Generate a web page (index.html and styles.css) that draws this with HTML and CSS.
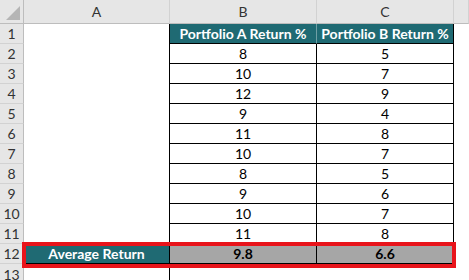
FILE: index.html
```html
<!DOCTYPE html>
<html>
<head>
<meta charset="utf-8">
<link rel="stylesheet" href="styles.css">
</head>
<body>
<div class="sheet">
  <div class="row head">
    <div class="rh corner"><span class="tri"></span></div>
    <div class="ch a">A</div>
    <div class="ch b">B</div>
    <div class="ch c">C</div>
    <div class="ch rest"></div>
  </div>
  <div class="row">
    <div class="rh">1</div>
    <div class="cell a blank"></div>
    <div class="cell b title">Portfolio A Return %</div>
    <div class="cell c title">Portfolio B Return %</div>
    <div class="cell rest"></div>
  </div>
  <div class="row"><div class="rh">2</div><div class="cell a blank"></div><div class="cell b">8</div><div class="cell c">5</div><div class="cell rest"></div></div>
  <div class="row"><div class="rh">3</div><div class="cell a blank"></div><div class="cell b">10</div><div class="cell c">7</div><div class="cell rest"></div></div>
  <div class="row"><div class="rh">4</div><div class="cell a blank"></div><div class="cell b">12</div><div class="cell c">9</div><div class="cell rest"></div></div>
  <div class="row"><div class="rh">5</div><div class="cell a blank"></div><div class="cell b">9</div><div class="cell c">4</div><div class="cell rest"></div></div>
  <div class="row"><div class="rh">6</div><div class="cell a blank"></div><div class="cell b">11</div><div class="cell c">8</div><div class="cell rest"></div></div>
  <div class="row"><div class="rh">7</div><div class="cell a blank"></div><div class="cell b">10</div><div class="cell c">7</div><div class="cell rest"></div></div>
  <div class="row"><div class="rh">8</div><div class="cell a blank"></div><div class="cell b">8</div><div class="cell c">5</div><div class="cell rest"></div></div>
  <div class="row"><div class="rh">9</div><div class="cell a blank"></div><div class="cell b">9</div><div class="cell c">6</div><div class="cell rest"></div></div>
  <div class="row"><div class="rh">10</div><div class="cell a blank"></div><div class="cell b">10</div><div class="cell c">7</div><div class="cell rest"></div></div>
  <div class="row"><div class="rh">11</div><div class="cell a blank"></div><div class="cell b">11</div><div class="cell c">8</div><div class="cell rest"></div></div>
  <div class="row">
    <div class="rh">12</div>
    <div class="hl">
      <div class="cell a label">Average Return</div>
      <div class="cell b avg">9.8</div>
      <div class="cell c avg">6.6</div>
    </div>
    <div class="cell rest"></div>
  </div>
  <div class="row"><div class="rh">13</div><div class="cell a blank"></div><div class="cell b plain"></div><div class="cell c plain"></div><div class="cell rest"></div></div>
</div>
</body>
</html>
```

FILE: styles.css
```css
* { box-sizing: border-box; }
html, body { margin: 0; padding: 0; background: #fff; }
body { width: 469px; height: 280px; overflow: hidden; font-family: Lato, "Open Sans", "Liberation Sans", sans-serif; }
.sheet { display: flex; flex-direction: column; }
.row { display: flex; height: 20px; }
.row.head { height: 24px; }
.rh {
  width: 24px; flex: none;
  background: #e6e6e6;
  border-right: 1px solid #bdbdbd;
  border-bottom: 1px solid #d2d2d2;
  color: #333; font-size: 14px;
  display: flex; align-items: center; justify-content: center;
}
.corner { position: relative; border-bottom-color: #bdbdbd; }
.tri {
  position: absolute; right: 3px; bottom: 3px;
  width: 0; height: 0;
  border-left: 14px solid transparent;
  border-bottom: 14px solid #b5b5b5;
}
.ch {
  background: #e6e6e6;
  border-right: 1px solid #d2d2d2;
  border-bottom: 1px solid #bdbdbd;
  color: #333; font-size: 14px;
  display: flex; align-items: center; justify-content: center;
  flex: none;
}
.a { width: 146px; }
.b { width: 147px; }
.c { width: 137px; }
.rest { flex: 1; }
.cell {
  flex: none;
  display: flex; align-items: center; justify-content: center;
  font-size: 14px; color: #000;
  border-right: 1px solid #000;
  border-bottom: 1px solid #000;
}
.cell.rest { border: none; flex: 1; }
.cell.blank { border-bottom: none; }
.cell.title {
  background: #1f6a73; color: #fff; font-weight: 700;
  border-right-color: #6f9fa5;
  border-bottom-color: #000;
}
.cell.c.title { border-right-color: #000; }
.cell.plain { border: none; }
.hl { display: flex; position: relative; }
.hl::after {
  content: ""; position: absolute;
  left: -2px; right: -2px; top: -2px; bottom: -4px;
  border: 4px solid #e8141b;
}
.cell.label { background: #1f6a73; color: #fff; font-weight: 700; }
.cell.avg { background: #a6a6a6; font-weight: 700; }
.row:last-child .rh { border-bottom: none; }
```
